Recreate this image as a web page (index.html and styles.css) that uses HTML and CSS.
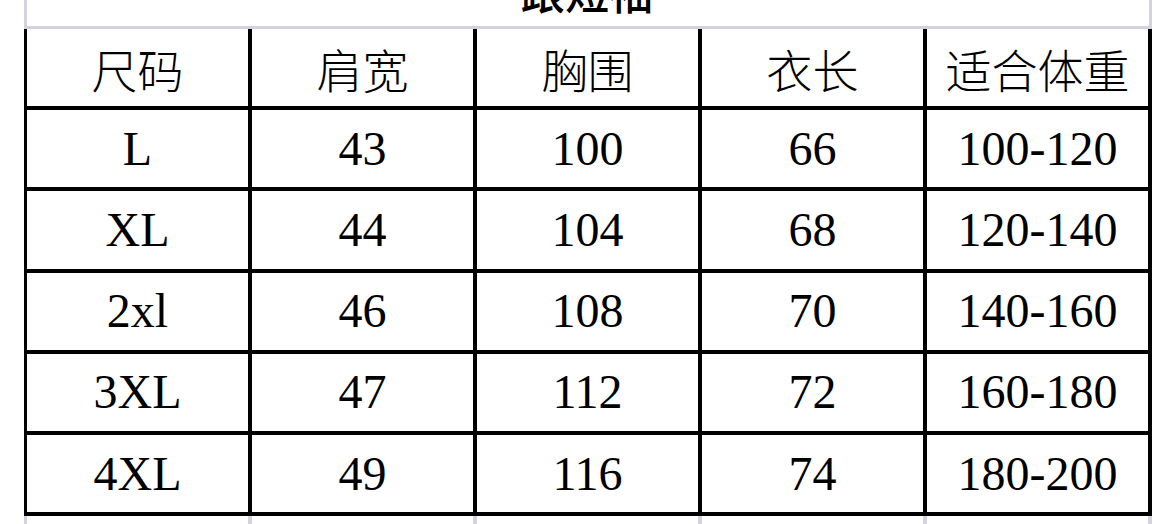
FILE: index.html
```html
<!DOCTYPE html>
<html lang="zh-CN">
<head>
<meta charset="utf-8">
<title>尺码表</title>
<link rel="stylesheet" href="styles.css">
</head>
<body>
<div class="sheet">
  <div class="title"><span>跟短袖</span></div>
  <div class="grid">
    <div class="cell head">尺码</div>
    <div class="cell head">肩宽</div>
    <div class="cell head">胸围</div>
    <div class="cell head">衣长</div>
    <div class="cell head">适合体重</div>

    <div class="cell">L</div>
    <div class="cell">43</div>
    <div class="cell">100</div>
    <div class="cell">66</div>
    <div class="cell">100-120</div>

    <div class="cell">XL</div>
    <div class="cell">44</div>
    <div class="cell">104</div>
    <div class="cell">68</div>
    <div class="cell">120-140</div>

    <div class="cell">2xl</div>
    <div class="cell">46</div>
    <div class="cell">108</div>
    <div class="cell">70</div>
    <div class="cell">140-160</div>

    <div class="cell">3XL</div>
    <div class="cell">47</div>
    <div class="cell">112</div>
    <div class="cell">72</div>
    <div class="cell">160-180</div>

    <div class="cell">4XL</div>
    <div class="cell">49</div>
    <div class="cell">116</div>
    <div class="cell">74</div>
    <div class="cell">180-200</div>
  </div>
  <div class="next">
    <div class="blank"></div>
    <div class="blank"></div>
    <div class="blank"></div>
    <div class="blank"></div>
    <div class="blank"></div>
  </div>
</div>
</body>
</html>
```

FILE: styles.css
```css
html, body {
  margin: 0;
  padding: 0;
  background: #ffffff;
  overflow: hidden;
}

body {
  width: 1157px;
  height: 524px;
}

.sheet {
  margin-left: 24px;
  margin-top: -48px;
  width: 1128px;
}

.title {
  height: 74px;
  border: 3px solid #d3d3df;
  border-top: none;
  display: flex;
  align-items: center;
  justify-content: center;
  font-family: "Noto Sans CJK SC", sans-serif;
  font-size: 46px;
  font-weight: 500;
  color: #000;
  line-height: 1;
}

.title span {
  display: inline-block;
  transform: scaleX(0.96);
  margin-left: -2px;
}

.grid {
  display: grid;
  grid-template-columns: repeat(5, 221px);
  grid-auto-rows: 77.2px;
  column-gap: 4px;
  row-gap: 4px;
  padding: 0 3px 4px 3px;
  background: #000;
}

.cell {
  background: #fff;
  display: flex;
  align-items: center;
  justify-content: center;
  font-family: "Liberation Serif", "Times New Roman", serif;
  font-size: 48px;
  color: #000;
  line-height: 1;
}

.cell.head {
  font-family: "Noto Sans CJK SC", sans-serif;
  font-size: 46px;
  font-weight: 300;
}

.next {
  display: grid;
  grid-template-columns: repeat(5, 221px);
  column-gap: 4px;
  padding: 0 3px;
  height: 12px;
  background: #d3d3df;
}

.blank {
  background: #fff;
}
```
